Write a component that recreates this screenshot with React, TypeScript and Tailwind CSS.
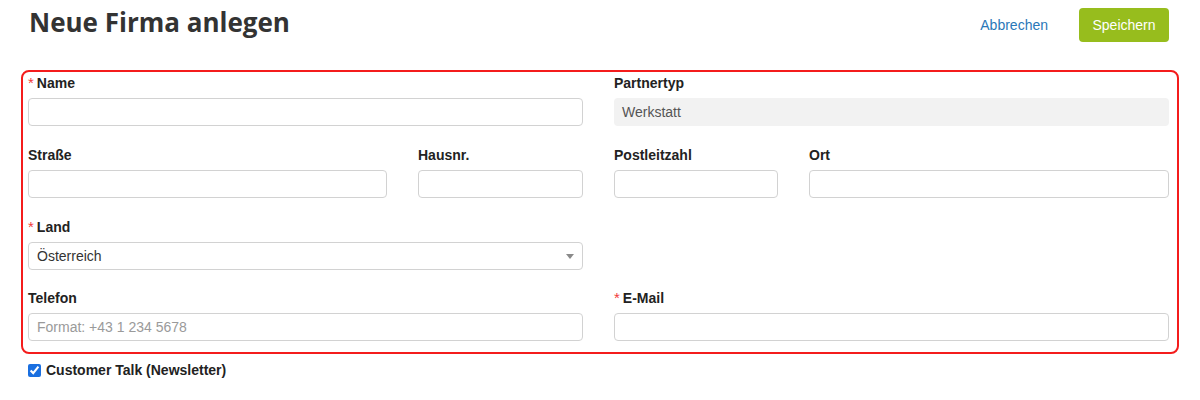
const inputCls =
  "h-[28px] w-full rounded-[4px] border border-[#d2d2d2] bg-white px-[8px] text-[14px] text-[#333] outline-none placeholder:text-[#9a9a9a]"

function Label({ text, required }: { text: string; required?: boolean }) {
  return (
    <div className="mb-[7px] flex h-[16px] items-center text-[14px] font-bold leading-[16px] text-[#222]">
      {required && (
        <span className="mr-[3px] mt-[-1px] text-[15px] font-normal text-[#f23a3a]">*</span>
      )}
      {text}
    </div>
  )
}

function Field({
  label,
  width,
  required,
  placeholder,
}: {
  label: string
  width: string
  required?: boolean
  placeholder?: string
}) {
  return (
    <div className={width}>
      <Label text={label} required={required} />
      <input className={inputCls} placeholder={placeholder} />
    </div>
  )
}

export default function App() {
  return (
    <div className="h-[400px] w-[1200px] overflow-hidden bg-white font-['Liberation_Sans',Arial,sans-serif]">
      {/* Header */}
      <div className="flex items-start justify-between pr-[31px] pt-[8px]">
        <h1 className="ml-[29px] mt-[-3px] font-['Open_Sans',sans-serif] text-[26px] font-bold leading-[34px] text-[#333]">
          Neue Firma anlegen
        </h1>
        <div className="flex items-center gap-[31px]">
          <a className="text-[14px] text-[#2a78b8]">Abbrechen</a>
          <button className="h-[34px] w-[90px] rounded-[4px] bg-[#97bd1d] text-[14px] text-white">
            Speichern
          </button>
        </div>
      </div>

      {/* Form box */}
      <div className="ml-[21px] mt-[28px] h-[284px] w-[1158px] rounded-[8px] border-2 border-[#f41c1c] pl-[5px] pr-[8px] pt-[3px]">
        <div className="flex gap-[31px]">
          <Field label="Name" width="w-[555px]" required />
          <div className="w-[555px]">
            <Label text="Partnertyp" />
            <div className="flex h-[28px] items-center rounded-[4px] bg-[#f2f2f2] px-[8px] text-[14px] text-[#555]">
              Werkstatt
            </div>
          </div>
        </div>

        <div className="mt-[21px] flex gap-[31px]">
          <Field label="Straße" width="w-[359px]" />
          <Field label="Hausnr." width="w-[165px]" />
          <Field label="Postleitzahl" width="w-[164px]" />
          <Field label="Ort" width="w-[360px]" />
        </div>

        <div className="mt-[21px] w-[555px]">
          <Label text="Land" required />
          <div className="flex h-[28px] items-center justify-between rounded-[4px] border border-[#d2d2d2] bg-white pl-[8px] pr-[8px] text-[14px] text-[#333]">
            <span>Österreich</span>
            <svg width="8" height="5" viewBox="0 0 8 5">
              <path d="M0 0 L8 0 L4 5 Z" fill="#8a8a8a" />
            </svg>
          </div>
        </div>

        <div className="mt-[20px] flex gap-[31px]">
          <Field label="Telefon" width="w-[555px]" placeholder="Format: +43 1 234 5678" />
          <Field label="E-Mail" width="w-[555px]" required />
        </div>
      </div>

      {/* Newsletter */}
      <label className="ml-[28px] mt-[6px] flex items-center gap-[5px] text-[14px] font-bold text-[#222]">
        <input type="checkbox" defaultChecked className="m-0 h-[13px] w-[13px] accent-[#1a6fe0]" />
        Customer Talk (Newsletter)
      </label>
    </div>
  )
}
